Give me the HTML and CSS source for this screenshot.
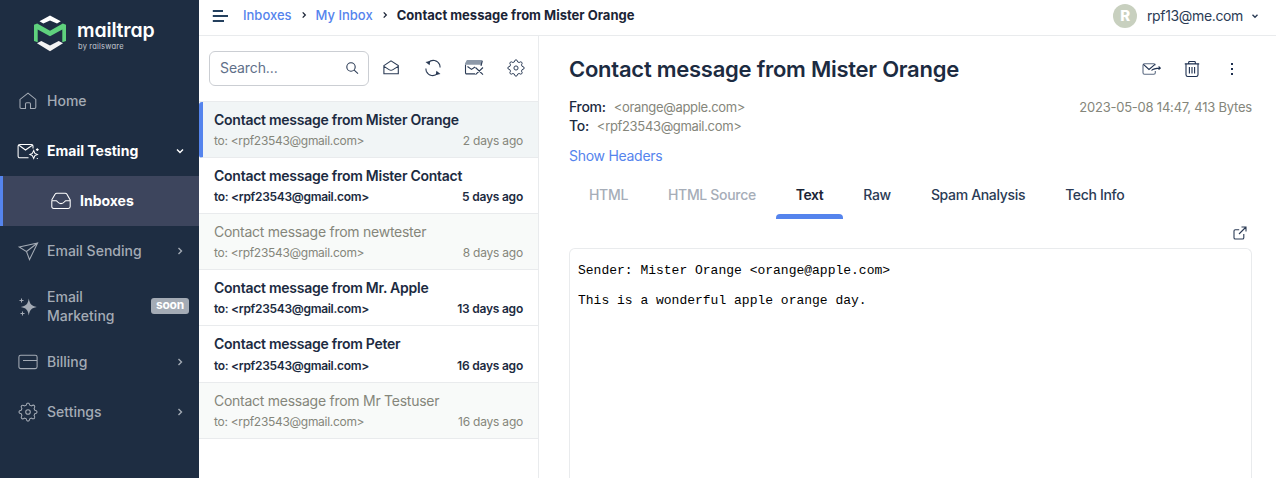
FILE: index.html
```html
<!DOCTYPE html>
<html lang="en">
<head>
<meta charset="utf-8">
<title>Mailtrap</title>
<link rel="stylesheet" href="styles.css">
</head>
<body>
<div class="app">
  <aside class="sidebar">
    <div class="logo">
      <svg width="34" height="38" viewBox="0 0 34 38">
        <path d="M6.5 7.3 17 1.5 27.8 7.3 24 9.6 17 6.6 10.3 9.6Z" fill="#fff"/>
        <path d="M1 27V10.8L4.2 9.4 17 16.8 29.8 9.4 33 10.8V27L29.3 28.2V15.6L17 22.2 4.7 15.6V28.2Z" fill="#5fd17d"/>
        <path d="M4 29.3 8.3 27 17 31.4 25.7 27 30 29.3 17 37.2Z" fill="#f3f3f3"/>
      </svg>
      <div class="wordmark"><span class="brand">mailtrap</span><span class="byline">by railsware</span></div>
    </div>
    <nav class="nav">
      <a class="item"><svg class="ico" viewBox="0 0 20 20"><path d="M10 2.2 17.8 8.4V16.2Q17.8 17.5 16.5 17.5H12.5V13Q12.5 11.8 11.3 11.8H8.7Q7.5 11.8 7.5 13V17.5H3.3Q2 17.5 2 16.2V8.4Z"/></svg><span class="label">Home</span></a>
      <a class="item open"><svg class="ico" viewBox="0 0 20 20" overflow="visible"><path d="M10.5 16.8H2Q.1 16.8.1 15V5Q.1 3.4 2 3.4H13.5Q15 3.4 15 5V7.5M1 4.3 7.5 9 14.3 4.3M15.7 9.5 16.9 12.4 19.4 13.5 16.9 14.6 15.7 17.5 14.3 14.6 11.9 13.5 14.3 12.4ZM19.3 7.2V10M17.9 8.6H20.7M19.3 17V18"/></svg><span class="label">Email Testing</span><svg class="chev" viewBox="0 0 10 10"><path d="M2 3.5 5 6.5 8 3.5"/></svg></a>
      <a class="item sub"><svg class="ico" viewBox="0 0 20 20" overflow="visible"><path d="M.7 9 4.2 3.1Q4.7 2.2 5.8 2.2H14.2Q15.3 2.2 15.8 3.1L19.2 9V15.5Q19.2 17.4 17.3 17.4H2.7Q.8 17.4.8 15.5V9.8H5.2C6.5 10 6.8 12.6 10 12.6S13.5 10 14.8 9.8H19"/></svg><span class="label">Inboxes</span></a>
      <a class="item"><svg class="ico" viewBox="0 0 20 20" overflow="visible"><path d="M1.2 6 19.6 2 11.5 18.6 8.5 10.5ZM8.5 10.5 19.6 2"/></svg><span class="label">Email Sending</span><svg class="chev" viewBox="0 0 10 10"><path d="M3.5 2 6.5 5 3.5 8"/></svg></a>
      <a class="item tall"><svg class="ico" viewBox="0 0 20 20" overflow="visible"><path class="solid" d="M10.8 1.6C11.8 7.3 13.5 9 18.8 10 13.5 11 11.8 12.7 10.8 18.4 9.8 12.7 8.1 11 2.8 10 8.1 9 9.8 7.3 10.8 1.6Z"/><path d="M3.5 1.5V5.5M1.5 3.5H5.5M4.5 14.5V18.5M2.5 16.5H6.5"/></svg><span class="label">Email<br>Marketing</span><span class="soon">soon</span></a>
      <a class="item"><svg class="ico" viewBox="0 0 20 20" overflow="visible"><rect x=".9" y="3.2" width="18.2" height="13.4" rx="1.8"/><path d="M5 8.5H19"/></svg><span class="label">Billing</span><svg class="chev" viewBox="0 0 10 10"><path d="M3.5 2 6.5 5 3.5 8"/></svg></a>
      <a class="item"><svg class="ico" viewBox="0 0 20 20" overflow="visible"><use href="#gear"/></svg><span class="label">Settings</span><svg class="chev" viewBox="0 0 10 10"><path d="M3.5 2 6.5 5 3.5 8"/></svg></a>
    </nav>
  </aside>

  <div class="main">
    <header class="topbar">
      <svg class="burger" width="18" height="14" viewBox="0 0 18 14"><path d="M1.8 2H12M1.8 7H17M1.8 12H13"/></svg>
      <div class="crumbs">
        <a>Inboxes</a><svg class="sep" viewBox="0 0 10 10"><path d="M3.7 2.4 6.3 5 3.7 7.6"/></svg><a class="my">My Inbox</a><svg class="sep" viewBox="0 0 10 10"><path d="M3.7 2.4 6.3 5 3.7 7.6"/></svg><b>Contact message from Mister Orange</b>
      </div>
      <div class="user"><span class="avatar">R</span><span class="mail">rpf13@me.com</span><svg class="chev" viewBox="0 0 10 10"><path d="M2.5 3.7 5 6.2 7.5 3.7"/></svg></div>
    </header>

    <div class="content">
      <section class="list">
        <div class="tools">
          <div class="search"><span>Search...</span><svg width="14" height="14" viewBox="0 0 14 14"><circle cx="6" cy="6" r="4.2"/><path d="M9.2 9.2 13 12.6"/></svg></div>
          <svg class="tool" viewBox="0 0 18 18"><path d="M1.9 6.6 9 1.8 16.3 6.6V14.8H1.9ZM2 7.4 7 10.6Q9 12 11 10.6L16.2 7.4"/></svg>
          <svg class="tool" viewBox="0 0 18 18"><path d="M4.3 3.3C8 .2 13.5 1 15.6 5.5Q16 6.8 16.1 8.5M13.7 14.7C10 17.8 4.5 17 2.4 12.5Q2 11.2 1.9 9.5"/><path class="fill" d="M1.5 3 6.3 2 5.6 6.2ZM16.5 15 11.7 16 12.4 11.8Z"/></svg>
          <svg class="tool" viewBox="0 0 18 18" overflow="visible"><path d="M2.8 1.5H17.5L16 5.8H.3L1 3Z" fill="#8d99a9" stroke="none"/><path d="M10 14.9H1.7Q.5 14.9.5 13.5V6M2.5 7.5 6.5 10.4 10 8M17.3 2 16 6.8M10.5 8.5 18 15.7M18 8.5 10.5 15.7"/><path d="M.5 6V5L2.2 1.6H17.3" stroke="#8d99a9"/></svg>
          <svg class="tool" viewBox="0 0 20 20"><g id="gear"><circle cx="10" cy="10" r="2.3"/><path d="M8.2 3.2Q8.5.9 10 .9T11.8 3.2L13.5 3.9Q15.4 2.5 16.4 3.6T16.1 6.5L16.8 8.2Q19.1 8.5 19.1 10T16.8 11.8L16.1 13.5Q17.5 15.4 16.4 16.4T13.5 16.1L11.8 16.8Q11.5 19.1 10 19.1T8.2 16.8L6.5 16.1Q4.6 17.5 3.6 16.4T3.9 13.5L3.2 11.8Q.9 11.5.9 10T3.2 8.2L3.9 6.5Q2.5 4.6 3.6 3.6T6.5 3.9Z"/></g></svg>
        </div>
        <div class="msg unread active"><h3>Contact message from Mister Orange</h3><p><span>to: &lt;rpf23543@gmail.com&gt;</span><span>2 days ago</span></p></div>
        <div class="msg unread"><h3>Contact message from Mister Contact</h3><p><span>to: &lt;rpf23543@gmail.com&gt;</span><span>5 days ago</span></p></div>
        <div class="msg read"><h3>Contact message from newtester</h3><p><span>to: &lt;rpf23543@gmail.com&gt;</span><span>8 days ago</span></p></div>
        <div class="msg unread"><h3>Contact message from Mr. Apple</h3><p><span>to: &lt;rpf23543@gmail.com&gt;</span><span>13 days ago</span></p></div>
        <div class="msg unread loose"><h3>Contact message from Peter</h3><p><span>to: &lt;rpf23543@gmail.com&gt;</span><span>16 days ago</span></p></div>
        <div class="msg read"><h3>Contact message from Mr Testuser</h3><p><span>to: &lt;rpf23543@gmail.com&gt;</span><span>16 days ago</span></p></div>
      </section>

      <section class="detail">
        <div class="head">
          <h1>Contact message from Mister Orange</h1>
          <div class="actions">
            <svg width="20" height="18" viewBox="0 0 20 18"><path d="M14.3 11V12.8Q14.3 14.3 12.8 14.3H3.5Q2 14.3 2 12.8V5.2Q2 3.7 3.5 3.7H12.8Q14.3 3.7 14.3 5.2" stroke="#5c6b82"/><path d="M2.4 4.4 8 9.5 14 4.4M10.5 10.5Q12.5 8.3 19 8.1M17.6 6.5 19.4 8.1 17.6 9.7"/></svg>
            <svg width="18" height="18" viewBox="0 0 18 18"><path d="M1.8 3.9H16.2M5.7 3.7V2.2Q5.7 1.5 6.5 1.5H11.5Q12.3 1.5 12.3 2.2V3.7M3 4V14.8Q3 16.5 4.7 16.5H13.3Q15 16.5 15 14.8V4M6.4 7V13.4M9 7V13.4M11.6 7V13.4"/></svg>
            <svg width="18" height="18" viewBox="0 0 18 18"><path class="fill" d="M8 3h2v2H8zM8 8h2v2H8zM8 13h2v2H8z"/></svg>
          </div>
        </div>
        <div class="meta">
          <div><p><b>From:</b><span>&lt;orange@apple.com&gt;</span></p><p><b>To:</b><span>&lt;rpf23543@gmail.com&gt;</span></p></div>
          <span class="date">2023-05-08 14:47, 413 Bytes</span>
        </div>
        <a class="headers">Show Headers</a>
        <div class="tabs"><span class="off">HTML</span><span class="off">HTML Source</span><span class="on">Text</span><span>Raw</span><span>Spam Analysis</span><span>Tech Info</span></div>
        <div class="popout"><svg width="14" height="14" viewBox="0 0 14 14"><path d="M6.2 3.7H2.3Q1 3.7 1 5V11.7Q1 13 2.3 13H9.5Q10.8 13 10.8 11.7V8M8.5 1H13V5.5M13 1 6 8"/></svg></div>
        <pre class="body">Sender: Mister Orange &lt;orange@apple.com&gt;

This is a wonderful apple orange day.</pre>
      </section>
    </div>
  </div>
</div>
</body>
</html>
```
FILE: styles.css
```css
* { box-sizing: border-box; }
body { margin: 0; font-family: Inter, "Liberation Sans", sans-serif; color: #1c2b41; background: #fff; }
h1, h3, p, pre { margin: 0; }
svg { display: block; flex: none; fill: none; stroke: currentColor; stroke-width: 1.1; }
svg .fill, svg .solid { fill: currentColor; }
svg .fill { stroke: none; }
svg .solid { stroke: none; }
.app { display: flex; height: 478px; overflow: hidden; }

.sidebar { width: 199px; flex: none; background: #1e2d42; color: #a4abb5; }
.logo { display: flex; height: 76px; padding: 14px 0 0 33px; gap: 10px; }
.logo svg { stroke: none; }
.wordmark { display: flex; flex-direction: column; padding-top: 5px; font-feature-settings: "cv11"; }
.brand { font-size: 19.5px; line-height: 23px; font-weight: 600; letter-spacing: -0.15px; color: #fff; }
.byline { font-size: 7.5px; line-height: 9px; padding-left: 1px; letter-spacing: 0.2px; color: #c4c9d1; }
.item { display: flex; align-items: center; height: 50px; padding: 0 14px 0 18px; }
.ico { width: 20px; height: 20px; stroke-width: 1.05; }
.label { flex: 1; padding: 0 0 2px 9px; font-size: 14px; line-height: 19px; font-weight: 500; }
.chev { width: 10px; height: 10px; stroke-width: 1.4; }
.open { color: #fff; }
.open .label, .sub .label { font-weight: 700; }
.sub { color: #fff; background: #3d455d; padding-left: 48px; border-left: 3px solid #5584ed; }
.sub .label { padding-left: 9px; }
.tall { height: 61px; padding-right: 10px; }
.soon { width: 38px; height: 16px; margin-bottom: 1px; border-radius: 3px; background: #a4abb5; color: #fff; font-size: 12px; line-height: 14px; font-weight: 700; letter-spacing: -0.2px; text-align: center; }

.main { flex: 1; min-width: 0; display: flex; flex-direction: column; }
.topbar { display: flex; align-items: center; height: 36px; padding: 0 16px 4px 12px; border-bottom: 1px solid #e9ebed; }
.burger { stroke: #24405e; stroke-width: 2; }
.crumbs { display: flex; align-items: center; flex: 1; padding: 0 0 2px 14px; font-size: 13px; font-weight: 500; color: #1b2436; }
.crumbs a { color: #5584ed; }
.crumbs b { font-weight: 700; }
.sep { width: 10px; height: 10px; margin: 0 7px; stroke-width: 1.3; }
.user { display: flex; align-items: center; font-size: 14px; letter-spacing: -0.35px; color: #2b3b55; }
.user .chev { margin-left: 7px; }
.avatar { width: 24px; height: 24px; margin-right: 10px; border-radius: 50%; background: #c8d0bf; color: #fff; font-size: 15px; line-height: 24px; font-weight: 800; text-align: center; }

.content { flex: 1; display: flex; min-height: 0; }
.list { width: 340px; flex: none; border-right: 1px solid #e9ebed; }
.tools { display: flex; align-items: center; height: 66px; padding: 0 13px 1px 10px; color: #2b3b55; border-bottom: 1px solid #e9ebed; }
.search { display: flex; flex: none; align-items: center; justify-content: space-between; width: 160px; height: 35px; margin-right: 13px; padding: 0 9px 1px 10px; border: 1px solid #cbced3; border-radius: 6px; font-size: 14px; letter-spacing: -0.1px; color: #5f7089; }
.search svg { color: #2b3b55; }
.tool { width: 18px; height: 18px; margin-right: 23.5px; }
.tool:last-child { margin-right: 0; }
.msg { height: 56px; padding: 8px 15px 0; border-bottom: 1px solid #e9ebed; }
.msg h3 { font-size: 14px; line-height: 20px; font-weight: 600; letter-spacing: -0.26px; }
.msg p { display: flex; justify-content: space-between; padding-top: 3px; font-size: 12px; line-height: 16px; font-weight: 600; letter-spacing: -0.3px; }
.msg p span:last-child { letter-spacing: -0.22px; }
.read { background: #f8faf9; color: #85867b; }
.read h3, .read p { font-weight: 400; }
.active { background: #f1f5f6; border-left: 4px solid #5584ed; border-top-left-radius: 3px; border-bottom-left-radius: 3px; padding-left: 11px; }
.active p { color: #85867b; font-weight: 400; }
.loose { height: 57px; }
.loose p { padding-top: 4px; }

.detail { flex: 1; min-width: 0; display: flex; flex-direction: column; padding: 20px 24px 0 30px; }
.head { display: flex; justify-content: space-between; }
.head h1 { font-size: 22px; line-height: 27px; font-weight: 600; letter-spacing: -0.25px; }
.actions { display: flex; align-items: center; gap: 22px; padding: 0 11px 2px 0; color: #1e3050; }
.meta { display: flex; justify-content: space-between; padding-top: 14px; font-size: 14px; line-height: 19px; }
.meta p { height: 19px; }
.meta b { font-weight: 500; margin-right: 8px; letter-spacing: -0.3px; }
.meta span { font-size: 13px; letter-spacing: -0.33px; color: #85867b; }
.meta .date { letter-spacing: -0.22px; padding-top: 1px; }
.headers { padding-top: 11px; font-size: 14px; line-height: 20px; letter-spacing: -0.28px; color: #5584ed; }
.tabs { display: flex; padding-top: 10px; font-size: 14px; font-weight: 500; letter-spacing: -0.33px; color: #2b3b55; }
.tabs span { display: flex; flex-direction: column; justify-content: space-between; height: 43px; padding: 0 20px; line-height: 38px; }
.tabs .off { color: #a6adb8; letter-spacing: -0.32px; }
.tabs .on { color: #1b2436; font-weight: 600; letter-spacing: -0.45px; }
.tabs .on::after { content: ""; height: 5px; margin: 0 -20px; border-radius: 4px 4px 0 0; background: #5584ed; }
.popout { display: flex; justify-content: flex-end; padding: 7px 5px 8px 0; color: #2b3b55; }
.body { flex: 1; padding: 14px 8px; border: 1px solid #e9ebed; border-bottom: 0; border-radius: 6px 6px 0 0; color: #000; font-family: "Liberation Mono", monospace; font-size: 13px; line-height: 15px; }
```
